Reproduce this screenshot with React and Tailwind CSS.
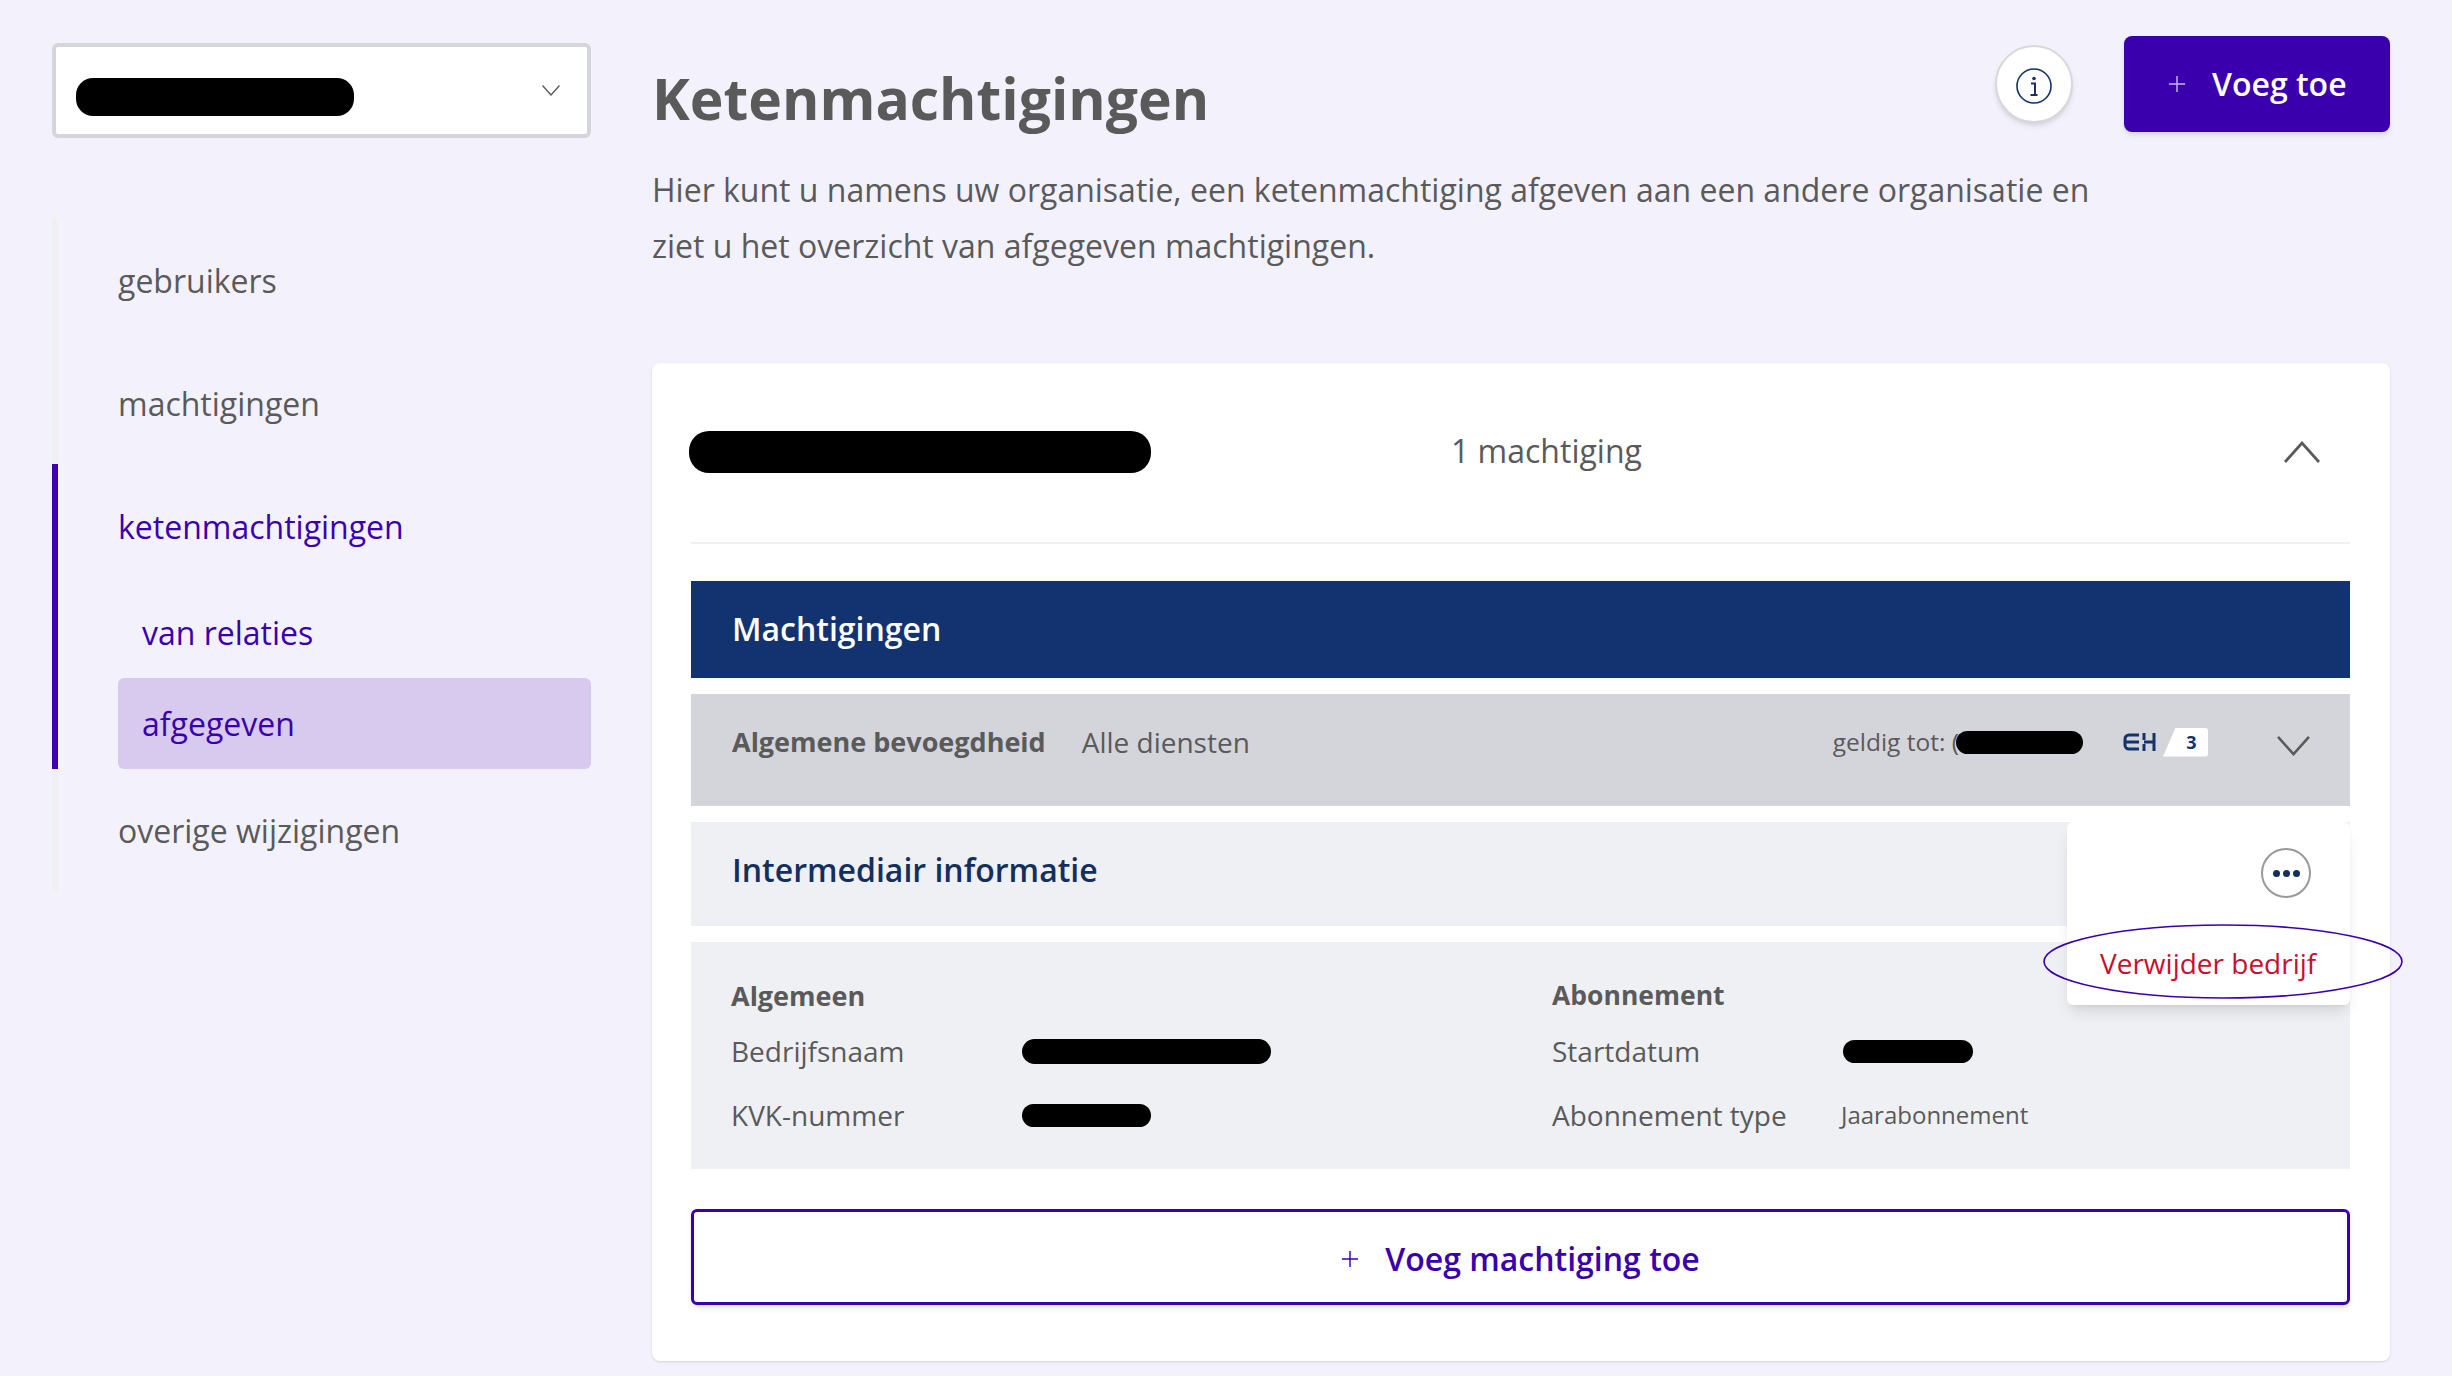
const Redacted = ({ className }) => <div className={`bg-black rounded-[14px] ${className}`}></div>;

const Chevron = ({ up, className }) => (
  <svg viewBox="0 0 36 22" fill="none" className={className}>
    <path d={up ? "M1 21 18 2l17 19" : "M1 1l17 19L35 1"} stroke="#5a5a5a" strokeWidth="2.8" />
  </svg>
);

const Plus = ({ color, className }) => (
  <svg viewBox="0 0 20 20" className={className}>
    <path d="M10 1v18M1 10h18" stroke={color} strokeWidth="1.6" />
  </svg>
);

const Sidebar = () => {
  return (
    <div className="w-[539px] shrink-0 pt-[43px]">
      <div className="h-[95px] bg-white border-4 border-[#d5d6dc] rounded-[6px] flex items-center pl-[20px] pr-[27px] justify-between">
        <Redacted className="w-[278px] h-[38px] rounded-[17px] mt-[13px]" />
        <Chevron className="w-[18px] h-[11px]" />
      </div>
      <div className="mt-[80px] border-l-[6px] border-[#eff0f4] text-[32px] text-[#5a5a5a]">
        <div className="h-[123px] flex items-center pl-[60px] pt-[2px]">gebruikers</div>
        <div className="h-[123px] flex items-center pl-[60px] pt-[2px]">machtigingen</div>
        <div className="-ml-[6px] border-l-[6px] border-[#3a00ad] text-[#3a00ad] pl-[60px]">
          <div className="h-[126px] flex items-center">ketenmachtigingen</div>
          <div className="h-[88px] flex items-center pl-[24px] pb-[2px]">van relaties</div>
          <div className="h-[91px] flex items-center pl-[24px] bg-[#d7caee] rounded-[6px]">afgegeven</div>
        </div>
        <div className="h-[123px] flex items-center pl-[60px] pt-[1px]">overige wijzigingen</div>
      </div>
    </div>
  );
};

const DetailRow = ({ label, children }) => (
  <div className="flex items-center h-[40px] text-[28px] text-[#5a5a5a]">
    <div className="w-[291px] shrink-0">{label}</div>
    {children}
  </div>
);

const App = () => {
  return (
    <div className="h-[1376px] overflow-hidden bg-[#f3f2fc] flex pl-[52px] font-['Open_Sans',sans-serif]">
      <Sidebar />
      <div className="ml-[61px] w-[1738px]">
        <div className="h-[132px] flex justify-between items-start">
          <h1 className="pt-[64px] text-[57px] leading-[68px] font-bold text-[#5a5a5a]">Ketenmachtigingen</h1>
          <div className="flex items-center gap-[51px] pt-[36px]">
            <div className="w-[78px] h-[78px] rounded-full bg-white border-2 border-[#d8d8dc] shadow-md flex items-center justify-center">
              <svg viewBox="0 0 36 36" className="w-[36px] h-[36px] mt-[4px]" fill="none">
                <circle cx="18" cy="18" r="17" stroke="#133369" strokeWidth="1.6" />
                <circle cx="18" cy="10.5" r="1.8" fill="#133369" />
                <path d="M15 15.5h4v11M14.5 27h7" stroke="#133369" strokeWidth="2" />
              </svg>
            </div>
            <button className="w-[266px] h-[96px] bg-[#3a00ad] rounded-[8px] shadow-md flex items-center pl-[44px] gap-[26px] text-white text-[32px] font-semibold">
              <Plus color="#c9b8ee" className="w-[18px] h-[18px]" />
              Voeg toe
            </button>
          </div>
        </div>
        <p className="mt-[30px] text-[32px] leading-[56px] text-[#5a5a5a] w-[1460px]">
          Hier kunt u namens uw organisatie, een ketenmachtiging afgeven aan een andere organisatie en ziet u het overzicht van afgegeven machtigingen.
        </p>

        <div className="mt-[89px] bg-white rounded-[8px] shadow-sm pl-[39px] pr-[40px] pb-[56px]">
          <div className="h-[181px] border-b-2 border-[#f0f0f4] flex items-center pb-[3px]">
            <Redacted className="w-[462px] h-[42px] rounded-[20px] -ml-[2px] mt-[2px]" />
            <div className="ml-[300px] text-[32px] text-[#5a5a5a]">1 machtiging</div>
            <Chevron up className="w-[36px] h-[22px] ml-auto mr-[30px] mt-[2px]" />
          </div>

          <div className="mt-[37px] h-[97px] bg-[#133370] flex items-center pl-[41px] pb-[2px] text-white text-[32px] font-semibold">Machtigingen</div>

          <div className="mt-[16px] h-[112px] bg-[#d4d5da] flex items-center pl-[41px] pb-[16px] text-[#5a5a5a]">
            <span className="text-[27px] font-bold">Algemene bevoegdheid</span>
            <span className="ml-[36px] text-[28px]">Alle diensten</span>
            <span className="ml-auto text-[24.5px] whitespace-nowrap">geldig tot: (</span>
            <Redacted className="w-[127px] h-[23px] rounded-[11px] -ml-[3px]" />
            <svg viewBox="0 0 33 18" className="w-[33px] h-[18px] ml-[40px]" fill="none">
              <path d="M16 2H6a4 4 0 0 0-4 4v6a4 4 0 0 0 4 4h10M2 9h14" stroke="#133369" strokeWidth="3" />
              <path d="M21 0v7M21 11v7M31 0v18M21 9h10" stroke="#133369" strokeWidth="3" />
            </svg>
            <div className="w-[45px] h-[29px] ml-[7px] bg-white rounded-r-[3px] [clip-path:polygon(28%_0,100%_0,100%_100%,0_100%)] flex items-center justify-center pl-[12px] text-[18px] font-bold text-[#133369]">3</div>
            <Chevron className="w-[35px] h-[20px] ml-[68px] mr-[39px] mt-[8px]" />
          </div>

          <div className="mt-[16px] h-[104px] bg-[#eff0f4] flex items-center pl-[41px] pb-[8px] relative text-[32px] font-semibold text-[#132f5e]">
            Intermediair informatie
            <div className="absolute right-0 top-0 w-[283px] h-[183px] bg-white rounded-[6px] shadow-lg z-10">
              <div className="flex justify-end pt-[26px] pr-[39px]">
                <div className="w-[50px] h-[50px] rounded-full border-2 border-[#999999] flex items-center justify-center gap-[3px]">
                  <span className="w-[7px] h-[7px] rounded-full bg-[#132f5e]"></span>
                  <span className="w-[7px] h-[7px] rounded-full bg-[#132f5e]"></span>
                  <span className="w-[7px] h-[7px] rounded-full bg-[#132f5e]"></span>
                </div>
              </div>
              <div className="mt-[45px] pl-[33px] text-[28px] leading-[40px] font-normal text-[#c8102e]">Verwijder bedrijf</div>
              <svg viewBox="0 0 360 75" className="absolute left-[-24px] top-[102px] w-[360px] h-[75px]" fill="none">
                <ellipse cx="180" cy="37.5" rx="179" ry="36.5" stroke="#3a00ad" strokeWidth="1.6" />
              </svg>
            </div>
          </div>

          <div className="mt-[16px] h-[227px] bg-[#eff0f4] pt-[34px] pl-[40px] grid grid-cols-[821px_1fr]">
            <div>
              <div className="h-[40px] flex items-center text-[27px] font-bold text-[#5a5a5a]">Algemeen</div>
              <div className="mt-[15px]">
                <DetailRow label="Bedrijfsnaam"><Redacted className="w-[249px] h-[25px] rounded-[12px]" /></DetailRow>
              </div>
              <div className="mt-[24px]">
                <DetailRow label="KVK-nummer"><Redacted className="w-[129px] h-[23px] rounded-[11px]" /></DetailRow>
              </div>
            </div>
            <div>
              <div className="h-[40px] flex items-center text-[26.5px] font-bold text-[#5a5a5a]">Abonnement</div>
              <div className="mt-[15px]">
                <DetailRow label="Startdatum"><Redacted className="w-[130px] h-[23px] rounded-[11px]" /></DetailRow>
              </div>
              <div className="mt-[24px]">
                <DetailRow label="Abonnement type"><span className="text-[24px] -ml-[2px]">Jaarabonnement</span></DetailRow>
              </div>
            </div>
          </div>

          <button className="mt-[40px] w-full h-[96px] bg-white border-[3px] border-[#3a00ad] rounded-[6px] shadow-md flex items-center justify-center gap-[26px] pt-[3px] text-[32px] font-semibold text-[#3a00ad]">
            <Plus color="#3a00ad" className="w-[18px] h-[18px]" />
            Voeg machtiging toe
          </button>
        </div>
      </div>
    </div>
  );
};

export default App;
